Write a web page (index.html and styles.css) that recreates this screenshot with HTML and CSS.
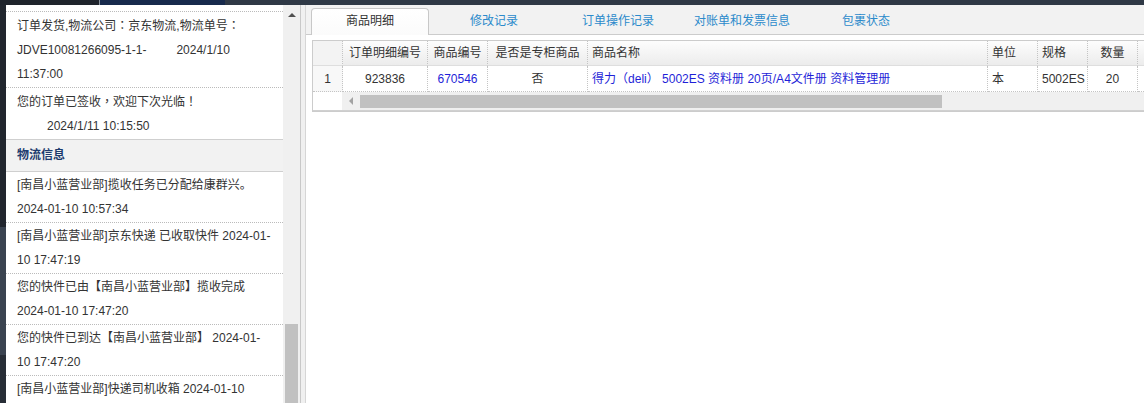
FILE: index.html
```html
<!DOCTYPE html>
<html lang="zh-CN">
<head>
<meta charset="utf-8">
<title>订单详情</title>
<link rel="stylesheet" href="styles.css">
</head>
<body>
<div class="topbar"><span class="seg seg-a"></span><span class="seg seg-b"></span></div>
<div class="main">
  <div class="strip"></div>
  <div class="side">
    <div class="side-list">
      <p class="entry">订单发货,物流公司<span class="p" lang="zh-TW">：</span>京东物流,物流单号<span class="p" lang="zh-TW">：</span><br>JDVE10081266095-1-1-<span class="gap"></span>2024/1/10<br>11:37:00</p>
      <p class="entry">您的订单已签收<span class="p" lang="zh-TW">，</span>欢迎下次光临<span class="p" lang="zh-TW">！</span><br><span class="indent">2024/1/11 10:15:50</span></p>
      <div class="section-title">物流信息</div>
      <p class="entry entry-top">[南昌小蓝营业部]揽收任务已分配给康群兴。<br>2024-01-10 10:57:34</p>
      <p class="entry">[南昌小蓝营业部]京东快递 已收取快件 2024-01-<br>10 17:47:19</p>
      <p class="entry">您的快件已由【南昌小蓝营业部】揽收完成<br>2024-01-10 17:47:20</p>
      <p class="entry">您的快件已到达【南昌小蓝营业部】 2024-01-<br>10 17:47:20</p>
      <p class="entry">[南昌小蓝营业部]快递司机收箱 2024-01-10<br>17:47:20</p>
    </div>
    <div class="vscroll"><span class="arrow-up"></span><div class="vthumb"></div></div>
  </div>
  <div class="splitter"></div>
  <div class="content">
    <div class="tabbar">
      <div class="tab active">商品明细</div>
      <div class="tab">修改记录</div>
      <div class="tab">订单操作记录</div>
      <div class="tab">对账单和发票信息</div>
      <div class="tab">包裹状态</div>
    </div>
    <div class="tab-body">
      <div class="grid">
        <table class="grid-table">
          <thead>
            <tr>
              <th class="c-rn"></th>
              <th class="c-id">订单明细编号</th>
              <th class="c-code">商品编号</th>
              <th class="c-flag">是否是专柜商品</th>
              <th class="c-name al">商品名称</th>
              <th class="c-unit al">单位</th>
              <th class="c-spec al">规格</th>
              <th class="c-qty">数量</th>
              <th class="c-more"></th>
            </tr>
          </thead>
          <tbody>
            <tr>
              <td class="rn">1</td>
              <td>923836</td>
              <td class="link">670546</td>
              <td>否</td>
              <td class="al link">得力<span class="p" lang="zh-TW">（</span>deli<span class="p" lang="zh-TW">）</span> 5002ES 资料册 20页/A4文件册 资料管理册</td>
              <td class="al">本</td>
              <td class="al">5002ES</td>
              <td>20</td>
              <td></td>
            </tr>
          </tbody>
        </table>
        <div class="hscroll">
          <div class="hs-gap"></div>
          <div class="hs-track"><span class="hs-btn"><span class="arrow-left"></span></span><div class="hs-thumb"></div></div>
        </div>
      </div>
    </div>
  </div>
</div>
</body>
</html>
```
FILE: styles.css
```css
html, body {
  margin: 0;
  padding: 0;
}
body {
  width: 1144px;
  height: 403px;
  overflow: hidden;
  font-family: "Liberation Sans", "Noto Sans CJK SC", sans-serif;
  font-size: 12px;
  color: #333;
  background: #fff;
}
.p {
  font-family: "Noto Sans CJK TC", "Noto Sans CJK SC", sans-serif;
}

.topbar {
  height: 5px;
  display: flex;
  background: #2f3946;
}
.seg-a {
  width: 99px;
  background: #1f242c;
  border-right: 1px solid #8a939e;
}
.seg-b {
  width: 125px;
  background: #172a4c;
}

.main {
  display: flex;
  height: 398px;
}

.strip {
  width: 6px;
  flex: none;
  background: linear-gradient(to bottom, #21262e 0, #21262e 222px, #3a4350 222px, #3a4350 350px, #272d36 350px);
}

.side {
  width: 294px;
  flex: none;
  display: flex;
  background: #fff;
}
.side-list {
  width: 277px;
  overflow: hidden;
  padding-top: 6px;
  box-sizing: border-box;
}
.entry {
  margin: 0;
  border-top: 1px dotted #bbb;
  padding: 1px 0 1px 11px;
  line-height: 24px;
  white-space: nowrap;
}
.entry-top {
  border-top: 0;
}
.gap {
  display: inline-block;
  width: 30px;
}
.indent {
  padding-left: 30px;
}
.section-title {
  height: 31px;
  line-height: 31px;
  border-top: 1px solid #cfcfcf;
  border-bottom: 1px solid #cfcfcf;
  background: #f2f2f2;
  padding-left: 11px;
  font-weight: bold;
  color: #1d3b6e;
}

.vscroll {
  width: 17px;
  background: #f0f0f0;
  display: flex;
  flex-direction: column;
  align-items: center;
}
.arrow-up {
  margin-top: 8px;
  width: 0;
  height: 0;
  border-left: 4px solid transparent;
  border-right: 4px solid transparent;
  border-bottom: 4px solid #505050;
}
.vthumb {
  margin-top: auto;
  width: 13px;
  height: 79px;
  background: #c1c1c1;
}

.splitter {
  width: 6px;
  flex: none;
  box-sizing: border-box;
  border-left: 1px solid #c8c8c8;
  border-right: 1px solid #d6d6d6;
  background: #f0f0f0;
}

.content {
  flex: 1;
  min-width: 0;
  overflow: hidden;
  background: #fff;
}
.tabbar {
  height: 29px;
  background: #f2f2f2;
  border-bottom: 1px solid #ccc;
  display: flex;
  align-items: flex-end;
  gap: 6px;
  padding-left: 5px;
}
.tab {
  width: 118px;
  height: 27px;
  box-sizing: border-box;
  margin-bottom: -1px;
  border: 1px solid transparent;
  border-bottom: 0;
  border-radius: 4px 4px 0 0;
  text-align: center;
  line-height: 24px;
  color: #2b8acb;
  flex: none;
}
.tab.active {
  background: linear-gradient(#fff, #fbfbfb);
  border-color: #c8c8c8;
  color: #333;
}

.tab-body {
  padding: 5px 0 0 6px;
}
.grid {
  width: 905px;
  border: 1px solid #ccc;
  border-right: 0;
}
.grid-table {
  border-collapse: separate;
  border-spacing: 0;
  table-layout: fixed;
  width: 905px;
}
.grid-table th,
.grid-table td {
  box-sizing: border-box;
  padding: 0;
  line-height: 24px;
  text-align: center;
  white-space: nowrap;
  overflow: hidden;
  border-right: 1px dotted #c4c4c4;
}
.grid-table th {
  font-weight: normal;
  color: #333;
  background: linear-gradient(#fdfdfd, #ececec);
  border-bottom: 1px solid #dedede;
}
.grid-table td {
  border-bottom: 1px dotted #c4c4c4;
  color: #333;
}
.grid-table .al {
  text-align: left;
  padding-left: 4px;
}
.grid-table .link {
  color: #1f1fd8;
}
.grid-table th.c-rn {
  background: #f3f3f3;
}
.grid-table td.rn {
  background: #f8f8f8;
}
.c-rn { width: 30px; }
.c-id { width: 85px; }
.c-code { width: 60px; }
.c-flag { width: 100px; }
.c-name { width: 400px; }
.c-unit { width: 50px; }
.c-spec { width: 50px; }
.c-qty { width: 50px; }
.c-more { width: 80px; }

.hscroll {
  display: flex;
  height: 18px;
  border-bottom: 1px solid #d0d0d0;
}
.hs-gap {
  width: 29px;
  background: #fff;
}
.hs-track {
  flex: 1;
  background: #f0f0f0;
  display: flex;
  align-items: center;
}
.hs-btn {
  width: 18px;
  height: 18px;
  display: flex;
  align-items: center;
  justify-content: center;
}
.arrow-left {
  width: 0;
  height: 0;
  border-top: 4px solid transparent;
  border-bottom: 4px solid transparent;
  border-right: 4px solid #a3a3a3;
}
.hs-thumb {
  width: 582px;
  height: 13px;
  background: #c1c1c1;
}
```
